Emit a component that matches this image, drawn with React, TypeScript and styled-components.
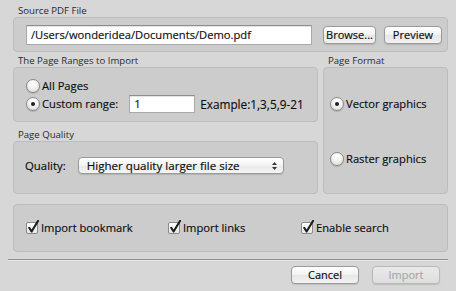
import React from "react";
import styled, { createGlobalStyle } from "styled-components";

const GlobalStyle = createGlobalStyle`
  html, body {
    margin: 0;
    padding: 0;
    background: #d7d7d7;
  }
  body {
    font-family: "Open Sans", "DejaVu Sans", sans-serif;
    color: #0d0d0d;
    -webkit-text-stroke: 0.15px currentColor;
  }
`;

const Window = styled.div`
  width: 456px;
  height: 291px;
  box-sizing: border-box;
  padding: 5px 8px 0 13px;
  background: #d7d7d7;
  overflow: hidden;
`;

const Group = styled.div<{ $grow?: boolean }>`
  display: flex;
  flex-direction: column;
  ${({ $grow }) => ($grow ? "flex: 1;" : "")}
`;

const Caption = styled.div`
  font-size: 9.6px;
  color: #2a2a2a;
  padding-left: 5px;
  height: 12px;
  line-height: 12px;
  -webkit-text-stroke: 0;
`;

const Box = styled.div<{ $h?: number; $grow?: boolean }>`
  box-sizing: border-box;
  background: #cccccc;
  border: 1px solid #bdbdbd;
  border-radius: 4px;
  ${({ $h }) => ($h ? `height: ${$h}px;` : "")}
  ${({ $grow }) => ($grow ? "flex: 1;" : "")}
`;

const SourceBox = styled(Box)`
  display: flex;
  align-items: center;
  padding: 0 5px 0 12px;
`;

const TextField = styled.div<{ $w: number; $h?: number }>`
  box-sizing: border-box;
  width: ${({ $w }) => $w}px;
  height: ${({ $h }) => $h ?? 20}px;
  background: #fff;
  border: 1px solid #a9a9a9;
  border-top-color: #8e8e8e;
  box-shadow: inset 0 1px 1px rgba(0, 0, 0, 0.12);
  font-size: 11.2px;
  line-height: ${({ $h }) => ($h ?? 20) - 2}px;
  padding-left: 4px;
  white-space: nowrap;
  overflow: hidden;
`;

const Button = styled.div<{ $w: number; $disabled?: boolean }>`
  box-sizing: border-box;
  width: ${({ $w }) => $w}px;
  height: 18px;
  border: 1px solid ${({ $disabled }) => ($disabled ? "#b9b9b9" : "#9a9a9a")};
  border-radius: 4px;
  background: ${({ $disabled }) =>
    $disabled
      ? "linear-gradient(#e9e9e9, #dedede)"
      : "linear-gradient(#ffffff, #f1f1f1 50%, #e6e6e6 51%, #f2f2f2)"};
  box-shadow: 0 1px 1px rgba(0, 0, 0, 0.12);
  color: ${({ $disabled }) => ($disabled ? "#a8a8a8" : "#0d0d0d")};
  font-size: 11px;
  line-height: 16px;
  text-align: center;
`;

const MiddleGrid = styled.div`
  display: grid;
  grid-template-columns: 305px 125px;
  column-gap: 5px;
  margin-top: 3px;
`;

const LeftColumn = styled.div`
  display: flex;
  flex-direction: column;
  gap: 7px;
`;

const RangeBox = styled(Box)`
  padding: 10px 0 0 12px;
  display: flex;
  flex-direction: column;
  gap: 1px;
`;

const Row = styled.div`
  display: flex;
  align-items: center;
  font-size: 11.2px;
  line-height: 16px;
  white-space: nowrap;
`;

const RadioCircle = styled.span<{ $on?: boolean }>`
  box-sizing: border-box;
  width: 14px;
  height: 14px;
  border-radius: 50%;
  border: 1px solid #8a8a8a;
  background: radial-gradient(circle at 50% 30%, #ffffff 0%, #f2f2f2 45%, #d4d4d4 100%);
  box-shadow: 0 1px 1px rgba(0, 0, 0, 0.15);
  display: inline-flex;
  align-items: center;
  justify-content: center;
  margin-right: 2px;
  flex: none;

  &::after {
    content: "";
    width: 4px;
    height: 4px;
    border-radius: 50%;
    background: ${({ $on }) => ($on ? "#1e1e1e" : "transparent")};
  }
`;

const Example = styled.span`
  margin-left: 5px;
  font-size: 11.8px;
`;

const QualityBox = styled(Box)`
  display: flex;
  align-items: flex-start;
  padding: 15px 0 0 11px;
`;

const QualityLabel = styled.span`
  font-size: 11.4px;
  line-height: 17px;
  margin-right: 12px;
`;

const Select = styled.div`
  box-sizing: border-box;
  width: 206px;
  height: 17px;
  border: 1px solid #9a9a9a;
  border-radius: 4px;
  background: linear-gradient(#ffffff, #f3f3f3 50%, #e9e9e9 51%, #f5f5f5);
  box-shadow: 0 1px 1px rgba(0, 0, 0, 0.12);
  font-size: 11.6px;
  line-height: 15px;
  padding-left: 8px;
  display: flex;
  justify-content: space-between;
  align-items: center;
`;

const FormatBox = styled(Box)`
  display: flex;
  flex-direction: column;
  padding: 28px 0 0 6px;
  gap: 39px;
`;

const OptionsBox = styled(Box)`
  margin-top: 10px;
  height: 48px;
  display: flex;
  align-items: center;
  padding: 0 0 1px 12px;
`;

const CheckItem = styled.div<{ $w: number }>`
  width: ${({ $w }) => $w}px;
  display: flex;
  align-items: center;
  font-size: 11.2px;
  line-height: 16px;
`;

const CheckBox = styled.span`
  position: relative;
  box-sizing: border-box;
  width: 12px;
  height: 12px;
  border: 1px solid #8a8a8a;
  border-radius: 2px;
  background: linear-gradient(#ffffff, #e6e6e6);
  margin-right: 3px;
  flex: none;

  svg {
    position: absolute;
    left: 0px;
    top: -3px;
  }
`;

const Separator = styled.div`
  margin: 7px 0 0 -5px;
  height: 1px;
  background: #8f8f8f;
  border-bottom: 1px solid #e8e8e8;
`;

const Footer = styled.div`
  display: flex;
  justify-content: flex-end;
  gap: 13px;
  margin-top: 5px;
  padding-right: 8px;
`;

const Radio = ({ on, label }: { on?: boolean; label: string }) => (
  <Row>
    <RadioCircle $on={on} />
    {label}
  </Row>
);

const Check = ({ label, w }: { label: string; w: number }) => (
  <CheckItem $w={w}>
    <CheckBox>
      <svg width="13" height="14" viewBox="0 0 13 14">
        <path
          d="M2.2 7.8 L4.6 11.5 L11 1"
          fill="none"
          stroke="#1c1c1c"
          strokeWidth="2.1"
          strokeLinecap="round"
          strokeLinejoin="round"
        />
      </svg>
    </CheckBox>
    {label}
  </CheckItem>
);

const SelectArrows = () => (
  <svg width="16" height="12" viewBox="0 0 16 12">
    <path d="M5 5 L7.5 2 L10 5 Z" fill="#333" />
    <path d="M5 7 L7.5 10 L10 7 Z" fill="#333" />
  </svg>
);

export default function App() {
  return (
    <Window>
      <GlobalStyle />
      <Group>
        <Caption>Source PDF File</Caption>
        <SourceBox $h={35}>
          <TextField $w={286}>/Users/wonderidea/Documents/Demo.pdf</TextField>
          <Button $w={53} style={{ marginLeft: 11 }}>
            Browse...
          </Button>
          <Button $w={58} style={{ marginLeft: 8 }}>
            Preview
          </Button>
        </SourceBox>
      </Group>

      <MiddleGrid>
        <LeftColumn>
          <Group>
            <Caption>The Page Ranges to Import</Caption>
            <RangeBox $h={55}>
              <Radio label="All Pages" />
              <Row>
                <RadioCircle $on />
                Custom range:
                <TextField $w={66} $h={18} style={{ marginLeft: 11 }}>
                  1
                </TextField>
                <Example>Example:1,3,5,9-21</Example>
              </Row>
            </RangeBox>
          </Group>
          <Group>
            <Caption>Page Quality</Caption>
            <QualityBox $h={53}>
              <QualityLabel>Quality:</QualityLabel>
              <Select>
                Higher quality larger file size
                <SelectArrows />
              </Select>
            </QualityBox>
          </Group>
        </LeftColumn>
        <Group>
          <Caption>Page Format</Caption>
          <FormatBox $grow>
            <Radio on label="Vector graphics" />
            <Radio label="Raster graphics" />
          </FormatBox>
        </Group>
      </MiddleGrid>

      <OptionsBox>
        <Check label="Import bookmark" w={142} />
        <Check label="Import links" w={133} />
        <Check label="Enable search" w={140} />
      </OptionsBox>

      <Separator />

      <Footer>
        <Button $w={68}>Cancel</Button>
        <Button $w={68} $disabled>
          Import
        </Button>
      </Footer>
    </Window>
  );
}
